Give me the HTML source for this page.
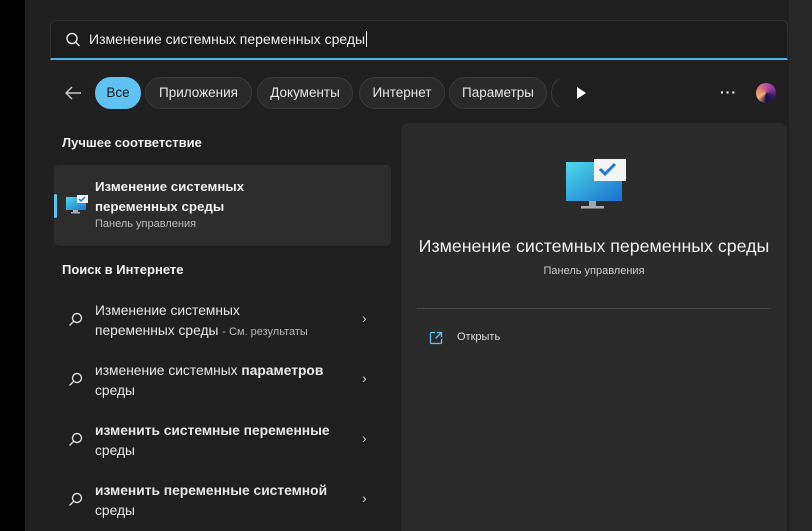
<!DOCTYPE html>
<html><head><meta charset="utf-8"><style>
*{margin:0;padding:0;box-sizing:border-box}
html,body{width:812px;height:531px;overflow:hidden}
body{background:#202020;font-family:"Segoe UI","Liberation Sans","Noto Sans CJK SC",sans-serif;color:#fff;position:relative}
.abs{position:absolute}
.strip{left:0;top:0;width:25px;height:531px;background:#000}
.rstrip{left:789px;top:0;width:23px;height:531px;background:#272727}
.search{left:50px;top:20px;width:738px;height:40px;background:#1c1c1c;border:1px solid #2e2e2e;border-radius:6px 6px 0 0;border-bottom:2px solid #4fb3e6}
.search span{position:absolute;left:38px;top:10px;font-size:14px;color:#f0f0f0}
.chip{top:77px;height:32px;border-radius:16px;background:#2a2a2a;border:1px solid #3a3a3a;font-size:13.5px;line-height:30px;text-align:center;color:#e8e8e8}
.h{font-size:13px;font-weight:bold;color:#f0f0f0}
.card{left:54px;top:165px;width:337px;height:81px;background:#2d2d2d;border-radius:5px}
.rp{left:401px;top:123px;width:386px;height:408px;background:#2b2b2b;border-radius:8px 8px 0 0}
.it{left:95px;font-size:13.8px;line-height:20px;color:#e8e8e8}
.chev{left:362px;font-size:14px;color:#ccc}
</style></head><body>
<div class="abs strip"></div>
<div class="abs rstrip"></div>
<div class="abs search">
<svg class="abs" style="left:14px;top:11px" width="16" height="16" viewBox="0 0 16 16"><circle cx="7" cy="6.5" r="5" fill="none" stroke="#ddd" stroke-width="1.5"/><line x1="10.5" y1="10" x2="14.5" y2="14" stroke="#ddd" stroke-width="1.5"/></svg>
<span>Изменение системных переменных среды<span style="position:static;border-left:1px solid #fff;margin-left:1px"></span></span>
</div>
<svg class="abs" style="left:64px;top:85px" width="18" height="16" viewBox="0 0 18 16"><path d="M17 8H2M8 2L2 8l6 6" fill="none" stroke="#ccc" stroke-width="1.4"/></svg>
<div class="abs chip" style="left:95px;width:46px;background:#5ec3f2;border-color:#5ec3f2;color:#1a1a1a">Все</div>
<div class="abs chip" style="left:145px;width:107px">Приложения</div>
<div class="abs chip" style="left:257px;width:96px">Документы</div>
<div class="abs chip" style="left:359px;width:86px">Интернет</div>
<div class="abs chip" style="left:449px;width:98px">Параметры</div>
<div class="abs chip" style="left:551px;width:30px;border-right:none;background:transparent"></div>
<div class="abs" style="left:559px;top:76px;width:40px;height:34px;background:#202020"></div>
<svg class="abs" style="left:575px;top:86px" width="12" height="14"><path d="M2 1L11 7L2 13Z" fill="#fff"/></svg>
<div class="abs" style="left:720px;top:84px;font-size:14px;letter-spacing:1px;font-weight:bold">···</div>
<div class="abs" style="left:756px;top:83px;width:20px;height:20px;border-radius:50%;background:conic-gradient(#c04fa0,#8a3a9a,#2a1a5a,#1a1040,#f0b080,#e08060,#c04fa0)"></div>
<div class="abs h" style="left:62px;top:135px">Лучшее соответствие</div>
<div class="abs card"></div>
<div class="abs" style="left:54px;top:194px;width:3px;height:24px;background:#5ec3f2;border-radius:2px"></div>
<svg class="abs" style="left:65px;top:194px" width="24" height="22" viewBox="0 0 24 22"><defs><linearGradient id="g" x1="0" y1="0" x2="1" y2="1"><stop offset="0" stop-color="#4fd6ec"/><stop offset="1" stop-color="#1a78d0"/></linearGradient></defs><rect x="1" y="3" width="20" height="13" fill="url(#g)"/><rect x="8" y="16" width="5" height="2" fill="#aaa"/><rect x="6" y="18" width="9" height="1.5" fill="#aaa"/><rect x="12" y="1" width="11" height="8" fill="#f4f4f4"/><path d="M14 5l2 2 4-4" fill="none" stroke="#1c7ad0" stroke-width="1.5"/></svg>
<div class="abs" style="left:95px;top:177px;font-size:13.3px;font-weight:bold;line-height:20px;color:#f0f0f0">Изменение системных<br>переменных среды</div>
<div class="abs" style="left:95px;top:218px;font-size:11px;color:#bbb">Панель управления</div>
<div class="abs h" style="left:62px;top:262px">Поиск в Интернете</div>
<svg class="abs" style="left:68px;top:312px" width="15" height="15" viewBox="0 0 15 15"><circle cx="9" cy="6" r="4.5" fill="none" stroke="#ddd" stroke-width="1.4"/><line x1="5.7" y1="9.3" x2="1.5" y2="13.5" stroke="#ddd" stroke-width="1.4"/></svg>
<div class="abs it" style="top:301px">Изменение системных<br>переменных среды <span style="font-size:11px;color:#bbb">- См. результаты</span></div>
<div class="abs chev" style="top:310px">›</div>
<svg class="abs" style="left:68px;top:372px" width="15" height="15" viewBox="0 0 15 15"><circle cx="9" cy="6" r="4.5" fill="none" stroke="#ddd" stroke-width="1.4"/><line x1="5.7" y1="9.3" x2="1.5" y2="13.5" stroke="#ddd" stroke-width="1.4"/></svg>
<div class="abs it" style="top:361px">изменение системных <b>параметров</b><br>среды</div>
<div class="abs chev" style="top:370px">›</div>
<svg class="abs" style="left:68px;top:432px" width="15" height="15" viewBox="0 0 15 15"><circle cx="9" cy="6" r="4.5" fill="none" stroke="#ddd" stroke-width="1.4"/><line x1="5.7" y1="9.3" x2="1.5" y2="13.5" stroke="#ddd" stroke-width="1.4"/></svg>
<div class="abs it" style="top:421px"><b>изменить системные переменные</b><br>среды</div>
<div class="abs chev" style="top:430px">›</div>
<svg class="abs" style="left:68px;top:492px" width="15" height="15" viewBox="0 0 15 15"><circle cx="9" cy="6" r="4.5" fill="none" stroke="#ddd" stroke-width="1.4"/><line x1="5.7" y1="9.3" x2="1.5" y2="13.5" stroke="#ddd" stroke-width="1.4"/></svg>
<div class="abs it" style="top:481px"><b>изменить переменные системной</b><br>среды</div>
<div class="abs chev" style="top:490px">›</div>
<div class="abs rp"></div>
<svg class="abs" style="left:565px;top:158px" width="62" height="54" viewBox="0 0 62 54"><defs><linearGradient id="g2" x1="0" y1="0" x2="1" y2="1"><stop offset="0" stop-color="#4fd8ea"/><stop offset="1" stop-color="#1870d0"/></linearGradient></defs><rect x="1" y="4" width="56" height="39" fill="url(#g2)"/><rect x="24" y="43" width="7" height="5" fill="#9aa"/><rect x="16" y="48" width="23" height="2.5" fill="#aab"/><rect x="29" y="1" width="32" height="22" fill="#f4f4f4"/><path d="M35 11l5 5 10-10" fill="none" stroke="#1c7ad0" stroke-width="3"/></svg>
<div class="abs" style="left:401px;top:236px;width:386px;text-align:center;font-size:17.8px;color:#f0f0f0">Изменение системных переменных среды</div>
<div class="abs" style="left:401px;top:265px;width:386px;text-align:center;font-size:11px;color:#ccc">Панель управления</div>
<div class="abs" style="left:417px;top:308px;width:354px;height:1px;background:#444"></div>
<svg class="abs" style="left:429px;top:331px" width="14" height="14" viewBox="0 0 14 14"><path d="M6 1.5H2.5a1 1 0 0 0-1 1v9a1 1 0 0 0 1 1h9a1 1 0 0 0 1-1V8M8 1.5h4.5V6M12.5 1.5L6.5 7.5" fill="none" stroke="#5ec3f2" stroke-width="1.3"/></svg>
<div class="abs" style="left:457px;top:331px;font-size:11px;color:#ddd">Открыть</div>
</body></html>
